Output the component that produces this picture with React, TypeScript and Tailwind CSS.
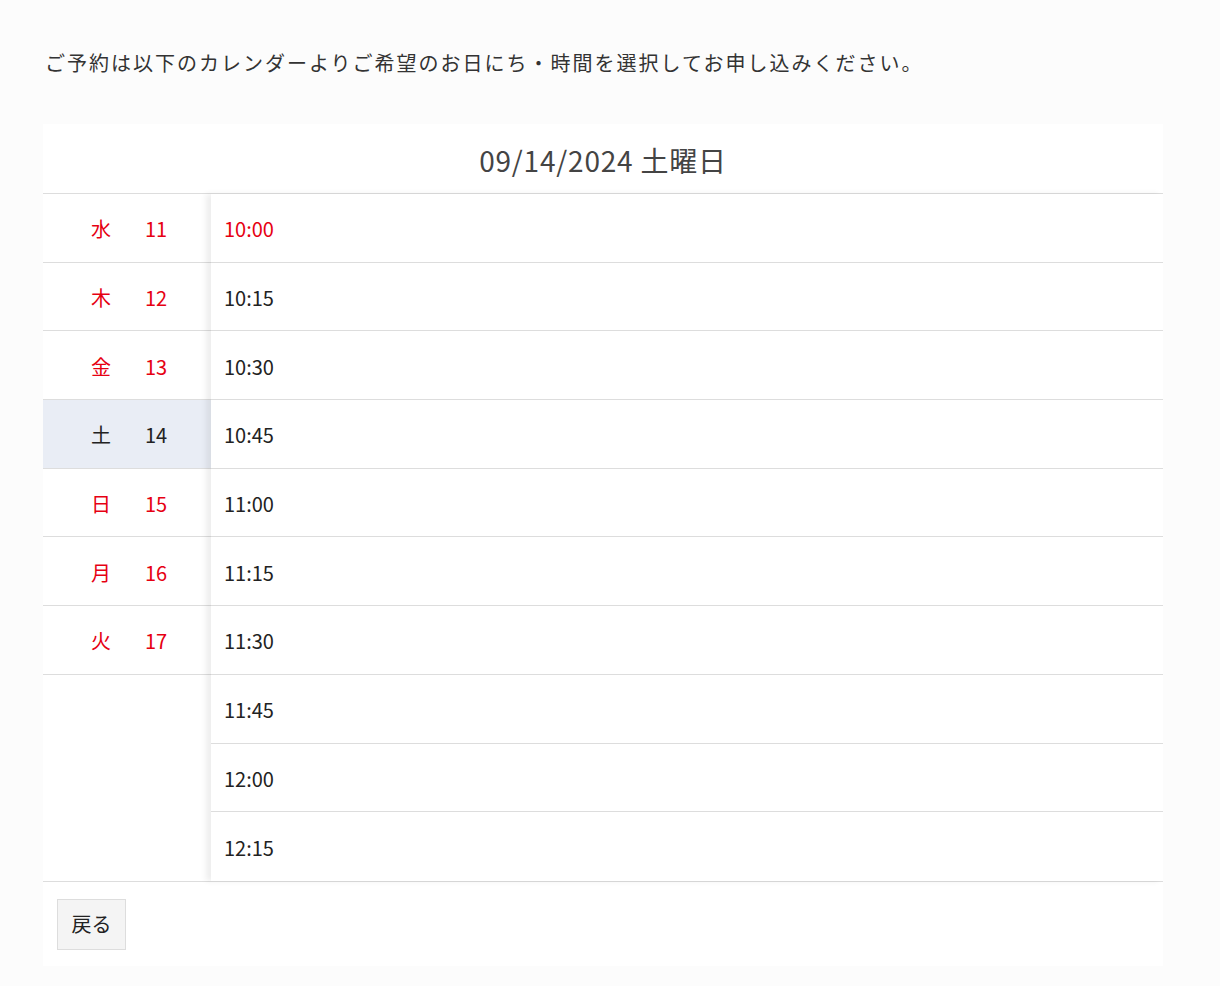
import React from "react";

const days = [
  { w: "水", d: 11 },
  { w: "木", d: 12 },
  { w: "金", d: 13 },
  { w: "土", d: 14, selected: true },
  { w: "日", d: 15 },
  { w: "月", d: 16 },
  { w: "火", d: 17 },
];

const times = ["10:00", "10:15", "10:30", "10:45", "11:00", "11:15", "11:30", "11:45", "12:00", "12:15"];

export default function App() {
  return (
    <div
      className="min-h-screen bg-[#fcfcfc] px-[43px] pt-[47px] pb-[21px] text-[#222]"
      style={{ fontFamily: '"Noto Sans CJK JP", "Noto Sans", sans-serif' }}
    >
      <p className="pl-[2px] text-[20px] leading-[32px] tracking-[2px] text-[#333]">
        ご予約は以下のカレンダーよりご希望のお日にち・時間を選択してお申し込みください。
      </p>

      <div className="mt-[45px] w-[1120px] bg-white pb-[16px]">
        <div className="flex h-[70px] items-center justify-center border-b border-[#ddd] pt-[2px] text-[28px] tracking-[0.8px] text-[#444]">
          09/14/2024 土曜日
        </div>

        <div className="flex border-b border-[#ddd]">
          <div className="w-[168px]">
            {days.map((day) => (
              <div
                key={day.d}
                className={
                  "flex h-[68.7px] items-center justify-center gap-[34px] border-b border-[#ddd] pl-[4px] pt-[3px] text-[20px] " +
                  (day.selected ? "bg-[#e9edf5] text-[#222]" : "text-[#e60012]")
                }
              >
                <span>{day.w}</span>
                <span>{day.d}</span>
              </div>
            ))}
          </div>
          <div className="flex-1 shadow-[-5px_0_6px_rgba(0,0,0,0.07)]">
            {times.map((t, i) => (
              <div
                key={t}
                className={
                  "flex h-[68.7px] items-center pl-[13px] pt-[3px] text-[20px] " +
                  (i < times.length - 1 ? "border-b border-[#ddd] " : "") +
                  (i === 0 ? "text-[#e60012]" : "text-[#222]")
                }
              >
                {t}
              </div>
            ))}
          </div>
        </div>

        <button className="ml-[14px] mt-[17px] flex h-[51px] w-[69px] items-center justify-center border border-[#ddd] bg-[#f4f4f4] text-[20px] text-[#222]">
          戻る
        </button>
      </div>
    </div>
  );
}
